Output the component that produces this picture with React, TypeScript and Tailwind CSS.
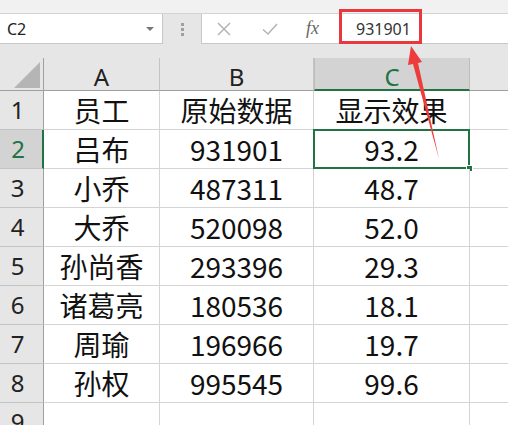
import React from 'react';

const rows = [
  ['员工', '原始数据', '显示效果'],
  ['吕布', '931901', '93.2'],
  ['小乔', '487311', '48.7'],
  ['大乔', '520098', '52.0'],
  ['孙尚香', '293396', '29.3'],
  ['诸葛亮', '180536', '18.1'],
  ['周瑜', '196966', '19.7'],
  ['孙权', '995545', '99.6'],
  ['', '', ''],
];

const cols = ['A', 'B', 'C'];

const cellFont = { fontFamily: '"Noto Sans CJK SC", "Noto Sans", sans-serif' };

export default function App() {
  return (
    <div className="relative h-[425px] w-[508px] overflow-hidden bg-[#e6e6e6]" style={cellFont}>
      {/* ribbon strip */}
      <div className="h-[14px] border-b border-[#d4d4d4] bg-[#f1f1f1]" />

      {/* formula bar */}
      <div className="flex h-[30px] items-stretch">
        <div className="flex w-[163px] items-center justify-between border-r border-b border-[#c8c8c8] bg-white pl-[7px] pr-[8px]">
          <span className="text-[16px] text-[#222]" style={{ fontFamily: '"Noto Sans", sans-serif' }}>C2</span>
          <span className="h-0 w-0 border-x-[4px] border-t-[4px] border-x-transparent border-t-[#777]" />
        </div>
        <div className="flex w-[38px] flex-col items-center justify-center gap-[2px]">
          <span className="h-[3px] w-[3px] bg-[#a0a0a0]" />
          <span className="h-[3px] w-[3px] bg-[#a0a0a0]" />
          <span className="h-[3px] w-[3px] bg-[#a0a0a0]" />
        </div>
        <div className="flex flex-1 items-center border-b border-l border-[#c8c8c8] bg-white">
          <svg width="16" height="16" viewBox="0 0 16 16" className="ml-[14px]">
            <path d="M2 2 L14 14 M14 2 L2 14" stroke="#b4b4b4" strokeWidth="1.5" />
          </svg>
          <svg width="18" height="16" viewBox="0 0 18 16" className="ml-[29px]">
            <path d="M2 8.5 L7 13 L16 3" stroke="#b4b4b4" strokeWidth="1.5" fill="none" />
          </svg>
          <span
            className="ml-[27px] text-[18px] italic text-[#666]"
            style={{ fontFamily: '"Liberation Serif", serif' }}
          >
            fx
          </span>
          <span className="ml-[37px] text-[16px] text-[#333]" style={{ fontFamily: '"Noto Sans", sans-serif' }}>
            931901
          </span>
        </div>
      </div>

      <div className="h-[14px]" />

      {/* sheet grid */}
      <div className="grid grid-cols-[44px_116px_154px_156px_1fr]">
        {/* header row */}
        <div className="flex h-[33px] items-end justify-end border-r border-b border-[#9f9f9f] pb-[2px] pr-[3px]">
          <div
            className="h-[26px] w-[26px] bg-[#b5b5b5]"
            style={{ clipPath: 'polygon(100% 0, 100% 100%, 0 100%)' }}
          />
        </div>
        {cols.map((c) => (
          <div
            key={c}
            className={
              c === 'C'
                ? 'flex h-[33px] items-center justify-center border-r border-l border-[#bdbdbd] border-b-2 border-b-[#217346] bg-[#d3d3d3] pt-[6px] text-[24px] leading-[24px] text-[#217346]'
                : 'flex h-[33px] items-center justify-center border-r border-b border-r-[#c4c4c4] border-b-[#9f9f9f] pt-[6px] text-[24px] leading-[24px] text-[#222]'
            }
            style={{ fontFamily: '"Noto Sans", sans-serif' }}
          >
            {c}
          </div>
        ))}
        <div className="h-[33px] border-b border-[#9f9f9f]" />

        {rows.map((r, i) => {
          const sel = i === 1;
          return (
            <React.Fragment key={i}>
              <div
                className={
                  sel
                    ? 'flex h-[39px] items-center justify-center border-r-2 border-b border-r-[#217346] border-b-[#c4c4c4] bg-[#d3d3d3] pr-[6px] text-[24px] text-[#217346]'
                    : 'flex h-[39px] items-center justify-center border-r border-b border-r-[#9f9f9f] border-b-[#c4c4c4] pr-[8px] text-[24px] text-[#222]'
                }
                style={{ fontFamily: '"Noto Sans", sans-serif' }}
              >
                {i + 1}
              </div>
              {r.map((v, j) => (
                <div
                  key={j}
                  className="relative flex h-[39px] items-center justify-center border-r border-b border-[#d4d4d4] bg-white text-[28px] text-[#111]"
                >
                  {v}
                  {sel && j === 2 && (
                    <div className="absolute -top-[1px] -left-[1px] -right-[1px] -bottom-[1px] border-2 border-[#217346]">
                      <div className="absolute -right-[5px] -bottom-[5px] h-[7px] w-[7px] border border-white bg-[#217346]" />
                    </div>
                  )}
                </div>
              ))}
              <div className="h-[39px] border-b border-[#d4d4d4] bg-white" />
            </React.Fragment>
          );
        })}
      </div>

      {/* annotation: red box + arrow */}
      <div className="absolute left-[339px] top-[9px] h-[35px] w-[83px] border-[3px] border-[#e8383d]" />
      <svg className="absolute left-0 top-0" width="508" height="425" viewBox="0 0 508 425">
        <polygon
          points="411,46 422,62 418,63 439,159 413,64 408,65"
          fill="#ee3b3b"
        />
      </svg>
    </div>
  );
}
